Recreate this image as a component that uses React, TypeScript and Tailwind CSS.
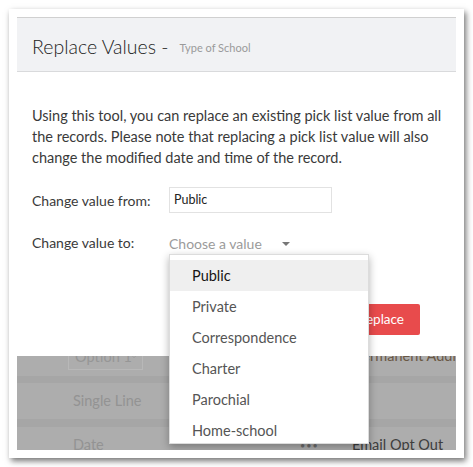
const items = ["Public", "Private", "Correspondence", "Charter", "Parochial", "Home-school"];

function ReplaceValues() {
  return (
    <div className="relative z-10 flex h-[338px] shrink-0 flex-col bg-white">
      <div className="flex h-[54px] shrink-0 items-center gap-[11px] border-b border-[#d9dadc] bg-[#f1f2f4] px-[15px] pt-[4px]">
        <h1 className="text-[19.5px] font-light text-[#222]">Replace Values -</h1>
        <span className="pt-[4px] text-[11px] text-[#9a9a9a]">Type of School</span>
      </div>
      <div className="flex flex-1 flex-col pl-[15px] pr-[8px] pt-[33px]">
        <p className="text-[14.5px] leading-[21px] text-[#3a3a3a]">
          Using this tool, you can replace an existing pick list value from all
          <br />
          the records. Please note that replacing a pick list value will also
          <br />
          change the modified date and time of the record.
        </p>
        <div className="mt-[19px] flex items-center text-[14px] text-[#3a3a3a]">
          <label className="w-[137px]">Change value from:</label>
          <div className="flex h-[26px] w-[163px] items-center border border-[#e2e2e2] px-[4px] text-[12.5px] text-[#222]">
            Public
          </div>
        </div>
        <div className="mt-[18px] flex items-center text-[14px] text-[#3a3a3a]">
          <label className="w-[137px]">Change value to:</label>
          <div className="flex items-center pt-[2px] text-[14px] text-[#9b9b9b]">
            Choose a value
            <span className="ml-[20px] h-0 w-0 border-x-[4px] border-t-[4px] border-x-transparent border-t-[#777]" />
          </div>
        </div>
        <div className="mt-[50px] flex justify-end pr-[28px]">
          <button className="h-[31px] rounded-[2px] bg-[#e84b4c] px-[16px] text-[13.5px] text-white">Replace</button>
        </div>
      </div>
    </div>
  );
}

function PageBehind() {
  return (
    <div className="-mt-[24px] flex flex-1 flex-col bg-[#adadad] text-[14.5px]">
      <div className="flex h-[44px] shrink-0 items-end">
        <div className="mb-[6px] ml-[51px] flex h-[27px] w-[75px] items-center justify-between whitespace-nowrap border border-[#b8b8b8] px-[6px] text-[#969696]">
          Option 1
          <svg width="9" height="6" viewBox="0 0 9 6" fill="none" stroke="#969696" strokeWidth="1.4">
            <path d="M1 1l3.5 3.5L8 1" />
          </svg>
        </div>
        <span className="mb-[9px] ml-[211px] whitespace-nowrap text-[#6a5845]">Permanent Address</span>
      </div>
      <div className="h-[7px] shrink-0 bg-[#a6a6a6]" />
      <div className="flex h-[36px] shrink-0 items-center pl-[56px] text-[#939393]">Single Line</div>
      <div className="h-[8px] shrink-0 bg-[#a6a6a6]" />
      <div className="flex flex-1 items-start pl-[56px] pt-[9px] leading-[17px]">
        <span className="w-[227px] text-[#939393]">Date</span>
        <span className="w-[52px] pt-[1px] text-[9px] tracking-[1px] text-[#6e6e6e]">•••</span>
        <span className="whitespace-nowrap text-[#3e3e3e]">Email Opt Out</span>
      </div>
    </div>
  );
}

export default function App() {
  return (
    <div className="h-[467px] w-[473px] bg-white pl-[9px] pt-[9px] font-['Lato',sans-serif]">
      <div className="h-[449px] w-[455px] bg-white p-[8px] shadow-[2px_3px_6px_rgba(0,0,0,0.55)]">
        <div className="relative flex h-[433px] w-[439px] flex-col overflow-hidden border-t border-[#d0d0d0]">
          <ReplaceValues />
          <PageBehind />
          <ul className="absolute left-[152px] top-[236px] z-20 h-[190px] w-[200px] overflow-hidden border border-[#dcdcdc] bg-white pt-[5px] shadow-[0_3px_8px_rgba(0,0,0,0.3)]">
            {items.map((item, i) => (
              <li
                key={item}
                className={
                  i === 0
                    ? "flex h-[31px] items-center bg-[#efefef] pl-[22px] text-[14.5px] text-[#151515]"
                    : "flex h-[31px] items-center pl-[22px] text-[14.5px] text-[#555]"
                }
              >
                {item}
              </li>
            ))}
          </ul>
        </div>
      </div>
    </div>
  );
}
